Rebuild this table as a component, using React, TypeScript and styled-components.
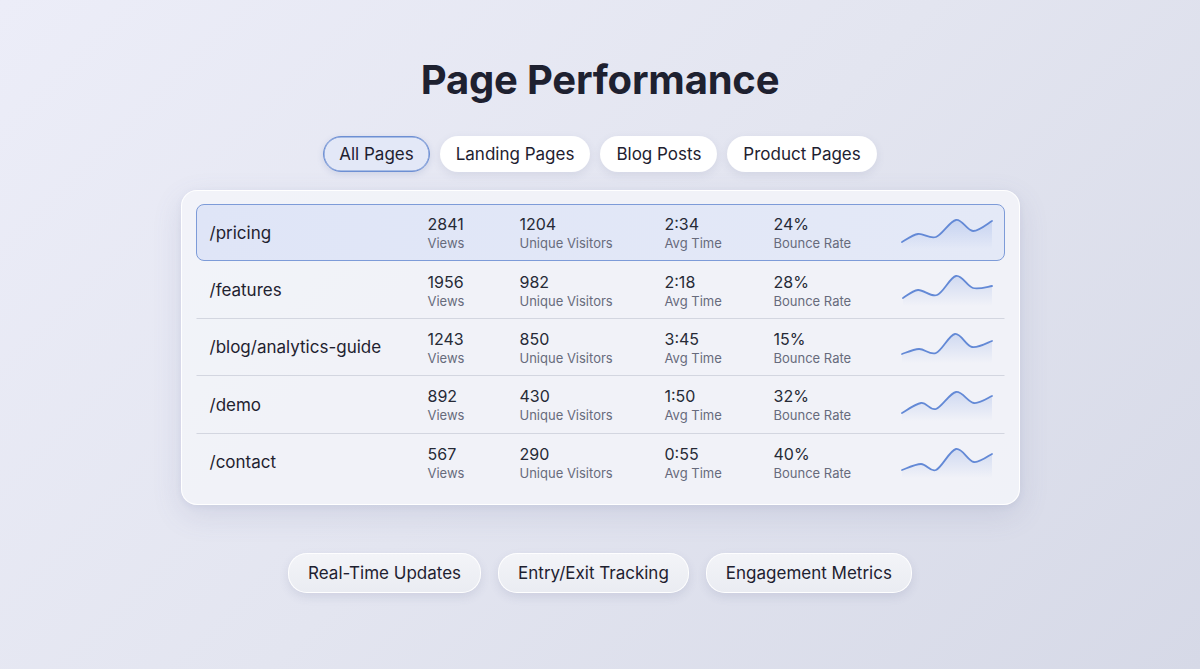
import React from "react";
import styled, { createGlobalStyle } from "styled-components";

const Global = createGlobalStyle`
  html, body { margin: 0; padding: 0; }
  body {
    width: 1200px;
    height: 669px;
    overflow: hidden;
    font-family: Inter, "Noto Sans", sans-serif;
    background: linear-gradient(135deg, #ecedf8 0%, #e3e5f0 50%, #d6d9e7 100%);
    color: #1e2130;
  }
`;

const Page = styled.div`
  width: 1200px;
  height: 669px;
  display: flex;
  flex-direction: column;
  align-items: center;
  padding-top: 56px;
  box-sizing: border-box;
`;

const Title = styled.h1`
  margin: 0;
  font-size: 40px;
  line-height: 48px;
  font-weight: 700;
  letter-spacing: -0.2px;
  color: #1e2130;
`;

const Tabs = styled.div`
  display: flex;
  gap: 10px;
  margin-top: 32px;
`;

const Tab = styled.button<{ $active?: boolean }>`
  height: 36px;
  padding: 0 15px;
  border-radius: 18px;
  font-family: inherit;
  font-size: 17px;
  color: #1e2130;
  border: 1px solid ${(p) => (p.$active ? "#6d8fd3" : "rgba(255,255,255,0.9)")};
  background: ${(p) => (p.$active ? "#e3e8f7" : "#ffffff")};
  box-shadow: ${(p) =>
    p.$active
      ? "0 2px 6px rgba(90,110,170,0.18), inset 0 0 0 0.5px #6d8fd3"
      : "0 3px 8px rgba(90,100,140,0.12)"};
  cursor: pointer;
`;

const Card = styled.div`
  margin-top: 18px;
  width: 839px;
  box-sizing: border-box;
  padding: 13px 14px;
  border-radius: 16px;
  background: rgba(242, 243, 248, 0.92);
  border: 1px solid rgba(255, 255, 255, 0.95);
  box-shadow: 0 10px 30px rgba(90, 100, 150, 0.14), 0 2px 6px rgba(90, 100, 150, 0.08);
  display: flex;
  flex-direction: column;
`;

const Row = styled.div<{ $active?: boolean; $last?: boolean }>`
  display: grid;
  grid-template-columns: 218px 92px 145px 109px 127px 92px;
  align-items: center;
  height: 57.4px;
  box-sizing: border-box;
  padding: 0 11px 0 13px;
  border-radius: ${(p) => (p.$active ? "8px" : "0")};
  border: 1px solid ${(p) => (p.$active ? "#7d9bd8" : "transparent")};
  border-bottom-color: ${(p) =>
    p.$active ? "#7d9bd8" : p.$last ? "transparent" : "#d3d6e0"};
  background: ${(p) =>
    p.$active ? "linear-gradient(90deg, #dfe5f7 0%, #e4e9f7 100%)" : "transparent"};
`;

const Path = styled.div`
  font-size: 17px;
  color: #1f2230;
`;

const Metric = styled.div`
  display: flex;
  flex-direction: column;
  margin-top: 1px;
`;

const Value = styled.span`
  font-size: 16px;
  line-height: 20px;
  color: #262a36;
`;

const Label = styled.span`
  font-size: 13px;
  line-height: 18px;
  color: #676b7c;
`;

const Chips = styled.div`
  display: flex;
  gap: 17px;
  margin-top: 48px;
`;

const Chip = styled.div`
  height: 38px;
  padding: 0 19px;
  display: flex;
  align-items: center;
  border-radius: 19px;
  font-size: 17px;
  color: #1e2130;
  background: linear-gradient(180deg, #f3f4f8 0%, #eaecf2 100%);
  border: 1px solid rgba(255, 255, 255, 0.95);
  box-shadow: 0 4px 10px rgba(90, 100, 140, 0.14);
`;

type Pt = [number, number];

function smoothPath(pts: Pt[]): string {
  let d = `M ${pts[0][0]} ${pts[0][1]}`;
  for (let i = 0; i < pts.length - 1; i++) {
    const p0 = pts[i - 1] || pts[i];
    const p1 = pts[i];
    const p2 = pts[i + 1];
    const p3 = pts[i + 2] || p2;
    const t = 1 / 6;
    const c1x = p1[0] + (p2[0] - p0[0]) * t;
    const c1y = p1[1] + (p2[1] - p0[1]) * t;
    const c2x = p2[0] - (p3[0] - p1[0]) * t;
    const c2y = p2[1] - (p3[1] - p1[1]) * t;
    d += ` C ${c1x.toFixed(1)} ${c1y.toFixed(1)}, ${c2x.toFixed(1)} ${c2y.toFixed(1)}, ${p2[0]} ${p2[1]}`;
  }
  return d;
}

const Spark: React.FC<{ pts: Pt[]; id: string }> = ({ pts, id }) => {
  const line = smoothPath(pts);
  const area = `${line} L ${pts[pts.length - 1][0]} 32 L ${pts[0][0]} 32 Z`;
  return (
    <svg width="92" height="32" viewBox="0 0 92 32" style={{ display: "block", overflow: "visible" }}>
      <defs>
        <linearGradient id={id} x1="0" y1="0" x2="0" y2="1">
          <stop offset="0%" stopColor="#7b9be0" stopOpacity="0.28" />
          <stop offset="100%" stopColor="#7b9be0" stopOpacity="0" />
        </linearGradient>
      </defs>
      <path d={area} fill={`url(#${id})`} />
      <path d={line} fill="none" stroke="#6389d6" strokeWidth="1.8" strokeLinecap="round" strokeLinejoin="round" />
    </svg>
  );
};

const rows = [
  { path: "/pricing", views: "2841", uv: "1204", time: "2:34", bounce: "24%",
    pts: [[1, 25], [17, 17], [35, 20], [55, 3], [72, 14], [91, 4]] as Pt[] },
  { path: "/features", views: "1956", uv: "982", time: "2:18", bounce: "28%",
    pts: [[2, 24], [17, 16], [36, 21], [55, 2], [72, 14], [91, 12]] as Pt[] },
  { path: "/blog/analytics-guide", views: "1243", uv: "850", time: "3:45", bounce: "15%",
    pts: [[1, 23], [18, 18], [35, 22], [54, 3], [71, 16], [91, 10]] as Pt[] },
  { path: "/demo", views: "892", uv: "430", time: "1:50", bounce: "32%",
    pts: [[1, 24], [20, 14], [35, 20], [55, 3], [73, 14], [91, 7]] as Pt[] },
  { path: "/contact", views: "567", uv: "290", time: "0:55", bounce: "40%",
    pts: [[1, 24], [20, 18], [35, 24], [55, 3], [73, 16], [91, 8]] as Pt[] },
];

export default function App() {
  return (
    <>
      <Global />
      <Page>
        <Title>Page Performance</Title>
        <Tabs>
          <Tab $active>All Pages</Tab>
          <Tab>Landing Pages</Tab>
          <Tab>Blog Posts</Tab>
          <Tab>Product Pages</Tab>
        </Tabs>
        <Card>
          {rows.map((r, i) => (
            <Row key={r.path} $active={i === 0} $last={i === rows.length - 1}>
              <Path>{r.path}</Path>
              <Metric>
                <Value>{r.views}</Value>
                <Label>Views</Label>
              </Metric>
              <Metric>
                <Value>{r.uv}</Value>
                <Label>Unique Visitors</Label>
              </Metric>
              <Metric>
                <Value>{r.time}</Value>
                <Label>Avg Time</Label>
              </Metric>
              <Metric>
                <Value>{r.bounce}</Value>
                <Label>Bounce Rate</Label>
              </Metric>
              <Spark pts={r.pts} id={`sg${i}`} />
            </Row>
          ))}
        </Card>
        <Chips>
          <Chip>Real-Time Updates</Chip>
          <Chip>Entry/Exit Tracking</Chip>
          <Chip>Engagement Metrics</Chip>
        </Chips>
      </Page>
    </>
  );
}
